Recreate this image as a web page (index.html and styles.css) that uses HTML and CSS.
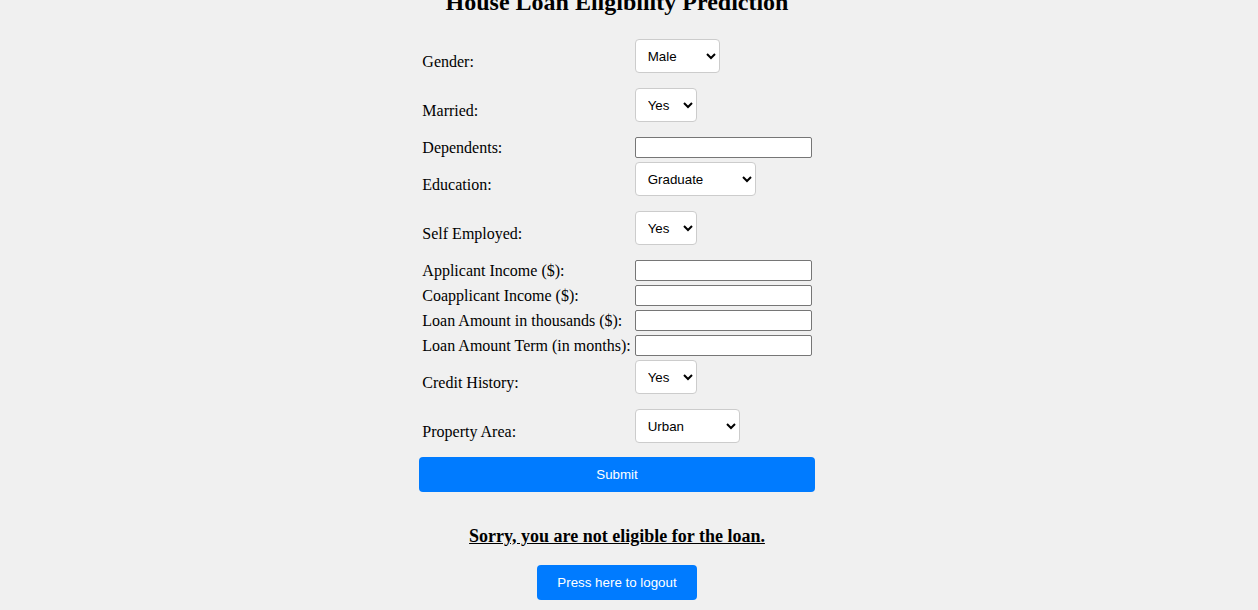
FILE: index.html
```html
<!DOCTYPE html>
<html lang="en">
<head>
<meta charset="utf-8">
<title>House Loan Eligibility Prediction</title>
<link rel="stylesheet" href="styles.css">
</head>
<body>
<main class="page">
  <h2 class="title">House Loan Eligibility Prediction</h2>
  <form class="loan-form">
    <table class="fields">
      <tr>
        <td><label for="gender">Gender:</label></td>
        <td><select id="gender" class="pick"><option>Male</option><option>Female</option></select></td>
      </tr>
      <tr>
        <td><label for="married">Married:</label></td>
        <td><select id="married" class="pick"><option>Yes</option><option>No</option></select></td>
      </tr>
      <tr>
        <td><label for="dependents">Dependents:</label></td>
        <td><input id="dependents" class="text" type="text"></td>
      </tr>
      <tr>
        <td><label for="education">Education:</label></td>
        <td><select id="education" class="pick"><option>Graduate</option><option>Not Graduate</option></select></td>
      </tr>
      <tr>
        <td><label for="self">Self Employed:</label></td>
        <td><select id="self" class="pick"><option>Yes</option><option>No</option></select></td>
      </tr>
      <tr>
        <td><label for="ai">Applicant Income ($):</label></td>
        <td><input id="ai" class="text" type="text"></td>
      </tr>
      <tr>
        <td><label for="ci">Coapplicant Income ($):</label></td>
        <td><input id="ci" class="text" type="text"></td>
      </tr>
      <tr>
        <td><label for="la">Loan Amount in thousands ($):</label></td>
        <td><input id="la" class="text" type="text"></td>
      </tr>
      <tr>
        <td><label for="lt">Loan Amount Term (in months):</label></td>
        <td><input id="lt" class="text" type="text"></td>
      </tr>
      <tr>
        <td><label for="ch">Credit History:</label></td>
        <td><select id="ch" class="pick"><option>Yes</option><option>No</option></select></td>
      </tr>
      <tr>
        <td><label for="pa">Property Area:</label></td>
        <td><select id="pa" class="pick"><option>Urban</option><option>Semiurban</option><option>Rural</option></select></td>
      </tr>
    </table>
    <button type="button" class="btn btn-submit">Submit</button>
  </form>
  <h3 class="result"><u>Sorry, you are not eligible for the loan.</u></h3>
  <a class="btn btn-logout" href="#">Press here to logout</a>
</main>
</body>
</html>
```

FILE: styles.css
```css
html, body {
  margin: 0;
  padding: 0;
}

body {
  background: #f0f0f0;
  font-family: "Liberation Serif", "Times New Roman", serif;
  font-size: 16px;
  color: #000;
  padding-right: 24px;
  overflow: hidden;
}

.page {
  display: flex;
  flex-direction: column;
  align-items: center;
  margin-top: -11px;
}

.title {
  font-size: 24px;
  font-weight: bold;
  margin: 0 0 20px;
}

.loan-form {
  width: fit-content;
  display: flex;
  flex-direction: column;
}

.fields {
  border-spacing: 2px;
}

.fields td {
  padding: 1px;
  vertical-align: middle;
}

.pick {
  font-family: "Liberation Sans", Arial, sans-serif;
  font-size: 13.33px;
  padding: 8px 10px 8px 8px;
  height: 34px;
  box-sizing: border-box;
  border: 1px solid #ccc;
  border-radius: 4px;
  background: #fff;
  color: #000;
  margin: 0 0 11px;
}

.text {
  font-family: "Liberation Sans", Arial, sans-serif;
  font-size: 13.33px;
  width: 177px;
  height: 21px;
  box-sizing: border-box;
  padding: 1px 2px;
  border: 1px solid #767676;
  border-radius: 2px;
  background: #fff;
  margin: 0;
}

.btn {
  font-family: "Liberation Sans", Arial, sans-serif;
  font-size: 13.33px;
  line-height: 15px;
  color: #fff;
  background: #007bff;
  border: none;
  border-radius: 4px;
  padding: 10px 20px;
  text-decoration: none;
  box-sizing: border-box;
}

.btn-submit {
  width: 100%;
  margin-top: 0;
}

.result {
  font-size: 18px;
  font-weight: bold;
  margin: 34px 0 18px;
}

.btn-logout {
  display: inline-block;
}
```
